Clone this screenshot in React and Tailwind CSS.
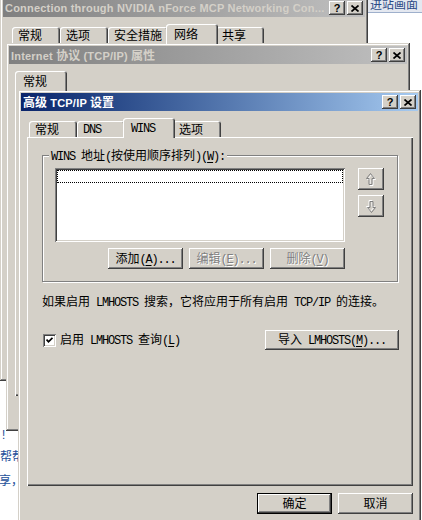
const RX = /[\u2e80-\u9fff\u3000-\u303f\uff00-\uffef]/;

const BODY = {
  c: "[font-family:'Noto_Sans_CJK_SC',sans-serif] text-[12px] leading-[14px]",
  l: "[font-family:'Liberation_Mono',monospace] text-[12px] leading-[14px] tracking-[-1.2px]",
};
const HEAD = {
  c: "[font-family:'Noto_Sans_CJK_SC',sans-serif] text-[12px] font-bold leading-[14px]",
  l: "[font-family:'Liberation_Sans',sans-serif] text-[11px] font-bold leading-[14px] tracking-[0.2px]",
};

const RAISED = "shadow-[inset_-1px_-1px_#404040,inset_1px_1px_#ffffff,inset_-2px_-2px_#808080,inset_2px_2px_#d4d0c8]";
const FRAME = "shadow-[inset_-1px_-1px_#404040,inset_1px_1px_#d4d0c8,inset_-2px_-2px_#808080,inset_2px_2px_#ffffff]";
const SUNKEN = "shadow-[inset_1px_1px_#808080,inset_-1px_-1px_#ffffff,inset_2px_2px_#404040,inset_-2px_-2px_#d4d0c8]";
const PANEL = "shadow-[inset_1px_1px_#ffffff,inset_-1px_-1px_#404040,inset_-2px_-2px_#808080]";

// splits text into CJK / latin runs, "&x" marks the mnemonic letter
function Txt({ s, head }) {
  const f = head ? HEAD : BODY;
  const runs = [];
  for (let i = 0; i < s.length; i++) {
    let ch = s[i];
    let k = RX.test(ch) ? "c" : "l";
    if (ch === "&") {
      ch = s[++i];
      k = "u";
    }
    const last = runs[runs.length - 1];
    if (last && last.k === k && k !== "u") last.t += ch;
    else runs.push({ k, t: ch });
  }
  return (
    <span className="whitespace-pre">
      {runs.map((r, i) => (
        <span
          key={i}
          className={r.k === "c" ? f.c : r.k === "u" ? `${f.l} underline underline-offset-2` : f.l}
        >
          {r.t}
        </span>
      ))}
    </span>
  );
}

function CapBtn({ children }) {
  return (
    <div className={`flex h-[14px] w-[16px] items-center justify-center bg-[#d4d0c8] text-black ${RAISED}`}>
      {children}
    </div>
  );
}

function Win({ title, active, className, children }) {
  return (
    <div className={`absolute flex flex-col bg-[#d4d0c8] p-[3px] ${FRAME} ${className}`}>
      <div
        className={`flex h-[18px] shrink-0 items-center justify-between overflow-hidden pl-[2px] pr-[2px] ${
          active
            ? "bg-linear-to-r from-[#0a246a] to-[#a6caf0] text-white"
            : "bg-linear-to-r from-[#808080] to-[#c0c0c0] text-[#d4d0c8]"
        }`}
      >
        <div className="flex-1 overflow-hidden">
          <Txt s={title} head />
        </div>
        <div className="flex shrink-0 gap-[2px]">
          <CapBtn>
            <span className="[font-family:'Liberation_Sans',sans-serif] text-[11px] font-bold leading-none">?</span>
          </CapBtn>
          <CapBtn>
            <svg width="8" height="7" viewBox="0 0 8 7">
              <path d="M0.5 0.5 7.5 6.5M7.5 0.5 0.5 6.5" stroke="black" strokeWidth="1.7" />
            </svg>
          </CapBtn>
        </div>
      </div>
      {children}
    </div>
  );
}

function Tab({ label, w, sel }) {
  return (
    <div
      className={`relative shrink-0 rounded-t-[3px] bg-[#d4d0c8] text-black shadow-[inset_1px_1px_#ffffff,inset_-1px_0_#404040,inset_-2px_0_#808080] ${w} ${
        sel ? "z-10 -mx-[2px] -mb-px h-[20px] pl-[8px] pt-[3px]" : "h-[16px] pl-[6px] pt-[1px]"
      }`}
    >
      <Txt s={label} />
    </div>
  );
}

function Btn({ label, dis, def, className }) {
  return (
    <div className={`h-[21px] w-[75px] ${def ? "border border-black" : ""} ${className || ""}`}>
      <div
        className={`flex h-full w-full items-center justify-center bg-[#d4d0c8] ${RAISED} ${
          dis ? "text-[#808080] [text-shadow:1px_1px_#ffffff]" : "text-black"
        }`}
      >
        <Txt s={label} />
      </div>
    </div>
  );
}

function Arrow({ down }) {
  const d = "M4.5 0.5 8.5 5.5 6 5.5 6 11.5 3 11.5 3 5.5 0.5 5.5Z";
  return (
    <svg width="10" height="13" viewBox="0 0 10 13" className={down ? "rotate-180" : ""}>
      <path d={d} transform="translate(1 1)" fill="none" stroke="#ffffff" />
      <path d={d} fill="none" stroke="#808080" />
    </svg>
  );
}

function ArrowBtn({ down }) {
  return (
    <div className={`flex h-[22px] w-[26px] items-center justify-center bg-[#d4d0c8] ${RAISED}`}>
      <Arrow down={down} />
    </div>
  );
}

export default function App() {
  return (
    <div className="relative h-[520px] w-[422px] overflow-hidden bg-white text-[12px] leading-[14px] text-black">
      {/* web page behind the dialogs */}
      <div className="absolute left-[368px] top-0 h-[13px] w-[54px] overflow-hidden border-b border-[#9fb0cc] bg-[#e4e8f0] pl-[2px] text-[#2c4a86]">
        <div className="-mt-[3px]">
          <Txt s="进站画面" />
        </div>
      </div>
      <div className="absolute left-0 top-[428px] flex flex-col gap-[6px] text-[#24509a]">
        <Txt s="!" />
        <Txt s="帮帮助" />
        <div className="-ml-px mt-[3px]">
          <Txt s="享，" />
        </div>
      </div>

      <Win
        title="Connection through NVIDIA nForce MCP Networking Con..."
        className="left-0 -top-[4px] h-[385px] w-[368px]"
      >
        <div className="ml-[9px] mt-[7px] flex items-end">
          <Tab label="常规" w="w-[48px]" />
          <Tab label="选项" w="w-[48px]" />
          <Tab label="安全措施" w="w-[60px]" />
          <Tab label="网络" w="w-[52px]" sel />
          <Tab label="共享" w="w-[48px]" />
        </div>
        <div className={`ml-[7px] h-[330px] w-[352px] ${PANEL}`} />
      </Win>

      <Win title="Internet 协议 (TCP/IP) 属性" className="left-[6px] top-[43px] h-[388px] w-[404px]">
        <div className="ml-[8px] mt-[7px] flex items-end">
          <Tab label="常规" w="w-[52px]" sel />
        </div>
        <div className={`ml-[6px] h-[306px] w-[388px] ${PANEL}`} />
      </Win>

      <Win title="高级 TCP/IP 设置" active className="left-[18px] top-[90px] h-[432px] w-[403px]">
        <div className="ml-[8px] mt-[7px] flex items-end">
          <Tab label="常规" w="w-[48px]" />
          <Tab label="DNS" w="w-[48px]" />
          <Tab label="WINS" w="w-[52px]" sel />
          <Tab label="选项" w="w-[48px]" />
        </div>
        <div className={`ml-[6px] h-[349px] w-[386px] px-[15px] pt-[18px] ${PANEL}`}>
          <div className="relative h-[127px] w-[356px] border border-[#808080] pl-[12px] pt-[12px] shadow-[inset_1px_1px_#ffffff,1px_1px_#ffffff]">
            <div className="absolute -top-[8px] left-[6px] bg-[#d4d0c8] px-[2px]">
              <Txt s="WINS 地址(按使用顺序排列)(&W):" />
            </div>
            <div className="flex gap-[13px]">
              <div className={`h-[74px] w-[290px] bg-white p-[2px] ${SUNKEN}`}>
                <div className="h-[13px] w-full border border-dotted border-black" />
              </div>
              <div className="flex flex-col gap-[5px]">
                <ArrowBtn />
                <ArrowBtn down />
              </div>
            </div>
            <div className="mt-[6px] flex w-[290px] justify-end gap-[6px]">
              <Btn label="添加(&A)..." />
              <Btn label="编辑(&E)..." dis />
              <Btn label="删除(&V)" dis />
            </div>
          </div>

          <div className="mt-[12px]">
            <Txt s="如果启用 LMHOSTS 搜索，它将应用于所有启用 TCP/IP 的连接。" />
          </div>

          <div className="mt-[20px] flex w-[357px] items-center justify-between">
            <div className="flex items-center gap-[4px] pl-px">
              <div className={`flex h-[13px] w-[13px] items-center justify-center bg-white ${SUNKEN}`}>
                <svg width="7" height="7" viewBox="0 0 7 7">
                  <path d="M0.5 2.5 2.5 4.8 6.5 0.8" fill="none" stroke="black" strokeWidth="1.8" />
                </svg>
              </div>
              <Txt s="启用 LMHOSTS 查询(&L)" />
            </div>
            <div className={`flex h-[20px] w-[134px] items-center justify-center bg-[#d4d0c8] ${RAISED}`}>
              <Txt s="导入 LMHOSTS(&M)..." />
            </div>
          </div>
        </div>

        <div className="mt-[7px] flex w-[392px] justify-end gap-[6px]">
          <Btn label="确定" def />
          <Btn label="取消" />
        </div>
      </Win>
    </div>
  );
}
